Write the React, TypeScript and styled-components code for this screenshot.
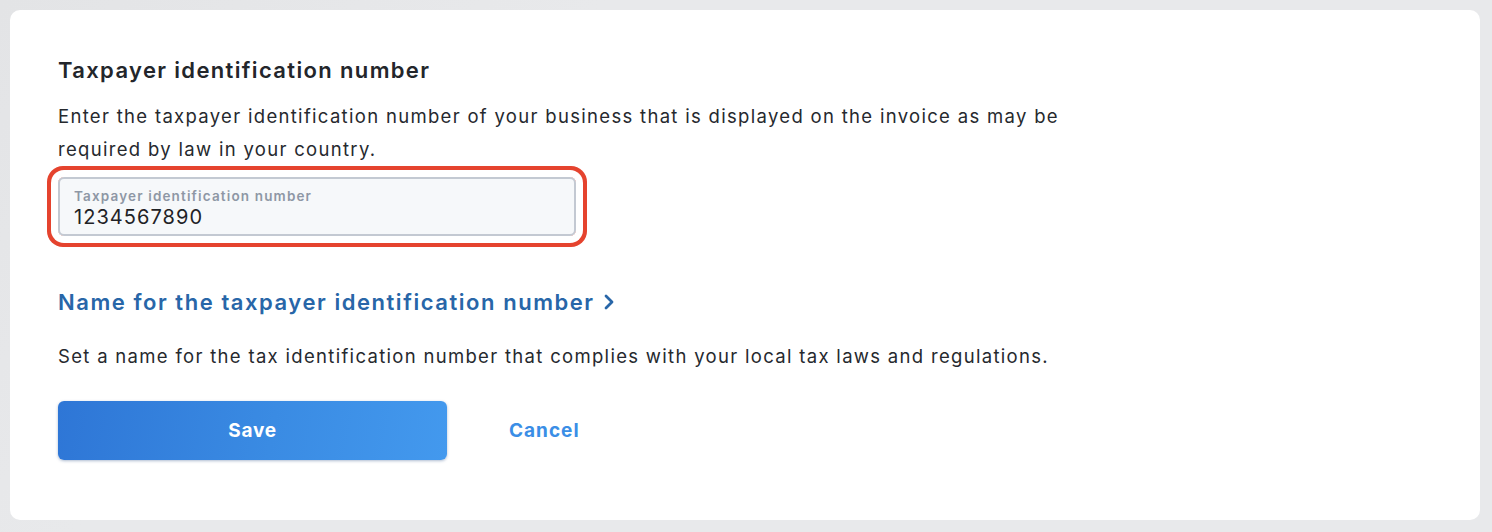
import React, { useState } from "react";
import styled, { createGlobalStyle } from "styled-components";

const GlobalStyle = createGlobalStyle`
  html, body {
    margin: 0;
    padding: 0;
    background: #e7e8ea;
  }
  body {
    font-family: Inter, "Noto Sans", sans-serif;
    -webkit-font-smoothing: antialiased;
  }
`;

const Page = styled.div`
  padding: 10px 12px 12px 10px;
  height: 532px;
  box-sizing: border-box;
  background: linear-gradient(135deg, #e3e4e6 0%, #e8e9eb 30%, #e8e9eb 100%);
`;

const Card = styled.section`
  background: #ffffff;
  border-radius: 10px;
  padding: 45px 48px 60px 48px;
  height: 510px;
  box-sizing: border-box;
  display: flex;
  flex-direction: column;
  align-items: flex-start;
`;

const Heading = styled.h2`
  margin: 0;
  font-family: Inter, "Noto Sans", sans-serif;
  font-size: 22px;
  line-height: 30px;
  font-weight: 600;
  color: #23262b;
  letter-spacing: 1.35px;
`;

const LinkHeading = styled.a`
  margin-top: 51px;
  display: inline-flex;
  align-items: center;
  gap: 8px;
  font-family: Inter, "Noto Sans", sans-serif;
  font-size: 22px;
  line-height: 30px;
  font-weight: 600;
  letter-spacing: 1.55px;
  color: #2866a8;
  text-decoration: none;
  cursor: pointer;
`;

const Text = styled.p<{ $top: number }>`
  margin: ${({ $top }) => $top}px 0 0;
  max-width: 1020px;
  font-size: 18.5px;
  line-height: 33px;
  letter-spacing: 1.31px;
  color: #26292e;
`;

const Ring = styled.div`
  margin-top: 11px;
  border-radius: 6px;
  box-shadow: 0 0 0 7px #ffffff, 0 0 0 11px #e5432e;
`;

const Field = styled.label`
  display: flex;
  flex-direction: column;
  justify-content: center;
  width: 518px;
  height: 59px;
  box-sizing: border-box;
  padding: 4px 14px 0;
  border: 2px solid #c3c9d2;
  border-radius: 6px;
  background: #f6f8fa;
`;

const FieldLabel = styled.span`
  font-size: 13.5px;
  line-height: 16px;
  font-weight: 600;
  letter-spacing: 1.15px;
  color: #8e97a5;
`;

const FieldInput = styled.input`
  border: none;
  outline: none;
  background: transparent;
  padding: 0;
  margin: 0;
  font-family: Inter, "Noto Sans", sans-serif;
  font-size: 20px;
  line-height: 26px;
  letter-spacing: 1.05px;
  color: #1f2226;
`;

const Actions = styled.div`
  margin-top: 28px;
  display: flex;
  align-items: center;
  gap: 62px;
`;

const PrimaryButton = styled.button`
  width: 389px;
  height: 59px;
  border: none;
  border-radius: 6px;
  background: linear-gradient(100deg, #2e76d6 0%, #3a8be3 55%, #4399ee 100%);
  box-shadow: 0 1px 3px rgba(20, 60, 120, 0.35);
  color: #ffffff;
  font-family: Inter, "Noto Sans", sans-serif;
  font-size: 19px;
  font-weight: 700;
  letter-spacing: 0.8px;
  cursor: pointer;
`;

const TextButton = styled.button`
  border: none;
  background: none;
  padding: 0;
  color: #3a8ee6;
  font-family: Inter, "Noto Sans", sans-serif;
  font-size: 19px;
  font-weight: 700;
  letter-spacing: 1px;
  cursor: pointer;
`;

const Chevron = () => (
  <svg width="12" height="16" viewBox="0 0 12 16" fill="none">
    <path d="M3 2l6 6-6 6" stroke="#2866a8" strokeWidth="2.8" strokeLinecap="round" strokeLinejoin="round" />
  </svg>
);

export default function App() {
  const [tin, setTin] = useState("1234567890");

  return (
    <>
      <GlobalStyle />
      <Page>
        <Card>
          <Heading>Taxpayer identification number</Heading>
          <Text $top={15}>
            Enter the taxpayer identification number of your business that is displayed on the invoice as may be
            required by law in your country.
          </Text>
          <Ring>
            <Field>
              <FieldLabel>Taxpayer identification number</FieldLabel>
              <FieldInput value={tin} onChange={(e) => setTin(e.target.value)} />
            </Field>
          </Ring>
          <LinkHeading>
            Name for the taxpayer identification number
            <Chevron />
          </LinkHeading>
          <Text $top={23}>
            Set a name for the tax identification number that complies with your local tax laws and regulations.
          </Text>
          <Actions>
            <PrimaryButton>Save</PrimaryButton>
            <TextButton>Cancel</TextButton>
          </Actions>
        </Card>
      </Page>
    </>
  );
}
